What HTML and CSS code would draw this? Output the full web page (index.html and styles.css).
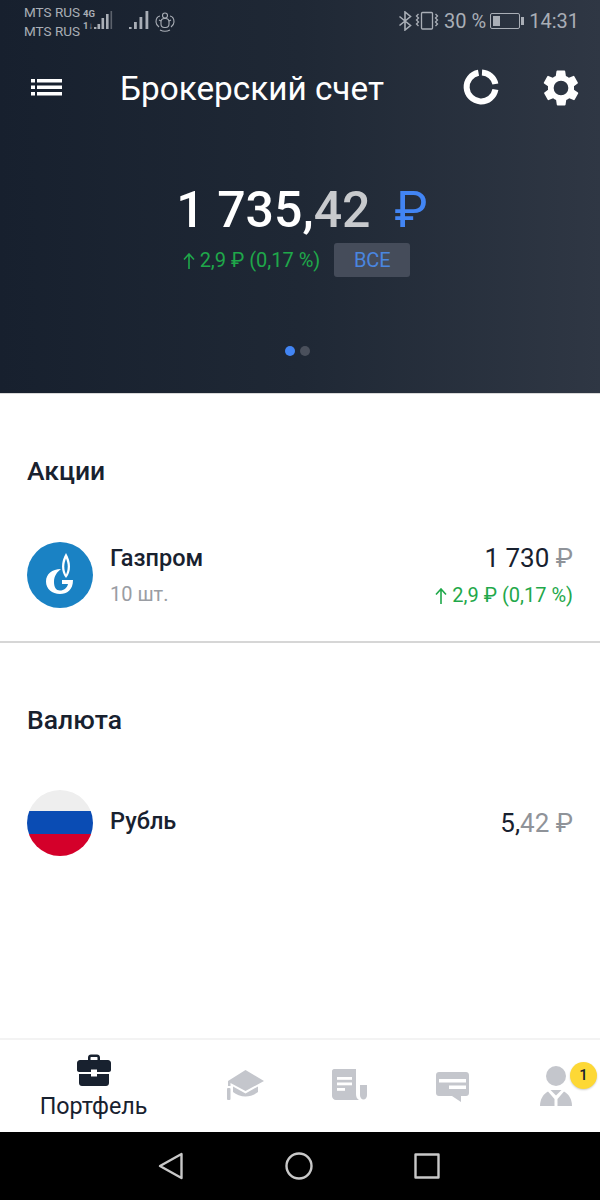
FILE: index.html
```html
<!DOCTYPE html>
<html lang="ru">
<head>
  <meta charset="UTF-8">
  <meta name="viewport" content="width=device-width, initial-scale=1.0">
  <title>Брокерский счет</title>
  <link rel="stylesheet" href="styles.css">
</head>
<body>
  <div class="app">
    <header class="hero">
      <div class="status-bar">
        <div class="status-left">
          <div class="carriers">
            <span>MTS RUS</span>
            <span>MTS RUS</span>
          </div>
          <div class="net-tags">
            <span>4G</span>
            <span>1↓</span>
          </div>
          <svg class="signal" width="19" height="20" viewBox="0 0 19 20" fill="#a9aeb6">
            <rect x="0" y="17" width="2.400" height="2"/>
            <rect x="3.500" y="14" width="2.600" height="5"/>
            <rect x="7.500" y="8" width="2.600" height="11"/>
            <rect x="12" y="4" width="2.600" height="15"/>
            <rect x="16.500" y="1" width="1.600" height="18" fill="#5c626c"/>
          </svg>
          <svg class="signal signal-two" width="20" height="20" viewBox="0 0 20 20" fill="#a9aeb6">
            <rect x="0" y="17" width="2.600" height="2"/>
            <rect x="5" y="12" width="2.800" height="7"/>
            <rect x="10.500" y="7" width="2.800" height="12"/>
            <rect x="16.500" y="1" width="2.800" height="18"/>
          </svg>
          <svg class="huawei" width="20" height="20" viewBox="0 0 20 20" fill="none" stroke="#a9aeb6" stroke-width="1.100">
            <circle cx="10" cy="3.500" r="2.500"/>
            <rect x="6" y="6.500" width="8" height="9" rx="3.500"/>
            <path d="M5 4C2.500 4.500 1 7 1 10c0 2 1 3.500 3 5M15 4c2.500.5 4 3 4 6 0 2-1 3.500-3 5M5 18c3 1.500 7 1.500 10 0M4 8l2 1M16 8l-2 1"/>
          </svg>
        </div>
        <div class="status-right">
          <svg width="14" height="20" viewBox="0 0 14 20" fill="none" stroke="#a9aeb6" stroke-width="1.600">
            <path d="M1.500 5.500l11 9L7 19V1l5.500 4.500-11 9"/>
          </svg>
          <svg class="vibrate" width="24" height="20" viewBox="0 0 24 20" fill="none" stroke="#a9aeb6" stroke-width="1.300">
            <rect x="6.500" y="1.500" width="11" height="16.500" rx="1"/>
            <path d="M3.500 3l-2 2 2 2-2 2 2 2-2 2 2 2M20.500 3l2 2-2 2 2 2-2 2 2 2-2 2"/>
          </svg>
          <span class="battery-pct">30 %</span>
          <div class="battery"><div class="battery-fill"></div></div>
          <span class="clock">14:31</span>
        </div>
      </div>

      <div class="toolbar">
        <svg class="menu-icon" width="31" height="18" viewBox="0 0 31 18" fill="#fff">
          <rect x="0" y="1" width="4" height="3.500"/>
          <rect x="6" y="1" width="25" height="3.500"/>
          <rect x="0" y="7.500" width="4" height="3.500"/>
          <rect x="6" y="7.500" width="25" height="3.500"/>
          <rect x="0" y="14" width="4" height="3.500"/>
          <rect x="6" y="14" width="25" height="3.500"/>
        </svg>
        <h1 class="toolbar-title">Брокерский счет</h1>
        <svg class="donut" width="36" height="36" viewBox="0 0 36 36" fill="none" stroke="#fff" stroke-width="6">
          <path d="M19 3.500A14.500 14.500 0 0 1 32.400 15"/>
          <path d="M32.400 20.500A14.500 14.500 0 1 1 15.500 3.700"/>
        </svg>
        <svg class="gear" width="42" height="42" viewBox="0 0 24 24" fill="#fff">
          <path fill-rule="evenodd" d="M19.400 13a7.600 7.600 0 0 0 0-2l2.100-1.600a.5.5 0 0 0 .1-.6l-2-3.500a.5.5 0 0 0-.6-.2l-2.500 1a7.300 7.300 0 0 0-1.700-1l-.4-2.700a.5.500 0 0 0-.5-.4h-4a.5.500 0 0 0-.5.400l-.4 2.700a7.300 7.300 0 0 0-1.700 1l-2.500-1a.5.5 0 0 0-.6.2l-2 3.500a.5.500 0 0 0 .1.600L4.600 11a7.600 7.600 0 0 0 0 2l-2.100 1.600a.5.5 0 0 0-.1.6l2 3.500a.5.500 0 0 0 .6.2l2.500-1c.5.400 1.100.7 1.700 1l.4 2.700a.5.500 0 0 0 .5.400h4a.5.500 0 0 0 .5-.400l.4-2.700c.6-.3 1.200-.6 1.700-1l2.500 1a.5.500 0 0 0 .6-.2l2-3.500a.5.500 0 0 0-.1-.6zM12 16.200a4.200 4.200 0 1 1 0-8.400 4.200 4.200 0 0 1 0 8.400z"/>
        </svg>
      </div>

      <div class="balance">
        <span class="balance-main">1 735,</span><span class="balance-cents">42</span><span class="balance-cur">₽</span>
      </div>
      <div class="balance-sub">
        <span class="gain">
          <svg class="arrow" width="12" height="16" viewBox="0 0 12 16" fill="none" stroke="#1fa84a" stroke-width="1.600">
            <path d="M6 16V1M1 6.500L6 1l5 5.500"/>
          </svg>
          2,9 ₽ (0,17 %)
        </span>
        <span class="all-btn">ВСЕ</span>
      </div>
      <div class="dots">
        <span class="dot dot-active"></span>
        <span class="dot"></span>
      </div>
    </header>

    <main class="content">
      <section class="group group-stocks">
        <h2 class="group-title">Акции</h2>
        <div class="asset">
          <svg class="asset-logo" width="66" height="66" viewBox="0 0 66 66">
            <circle cx="33" cy="33" r="33" fill="#1a82c4"/>
            <path d="M39 11c-2.700 4.500-4 9-4 13.500 0 4.500 1.300 8.500 4 11.500 2.700-3 4-7 4-11.500C43 20 41.700 15.500 39 11z" fill="#fff"/>
            <path d="M39 16.500c-1.200 3-1.700 5.500-1.700 8 0 3 .6 5.500 1.700 8 1.100-2.500 1.700-5 1.700-8 0-2.500-.5-5-1.700-8z" fill="#1a82c4"/>
            <path d="M34 27c-9 0-15 5-15 12.500C19 47 25 52 33 52c7 0 13-4 13-14H35v4h6c-1 4-4 6.500-8 6.500S27 45 27 40c0-6 3-10 7-13z" fill="#fff"/>
          </svg>
          <div class="asset-info">
            <div class="asset-name">Газпром</div>
            <div class="asset-qty">10 шт.</div>
          </div>
          <div class="asset-values">
            <div class="asset-price">1 730 <span class="muted">₽</span></div>
            <div class="asset-gain">
              <svg class="arrow" width="12" height="16" viewBox="0 0 12 16" fill="none" stroke="#1fa84a" stroke-width="1.600">
                <path d="M6 16V1M1 6.500L6 1l5 5.500"/>
              </svg>
              2,9 ₽ (0,17 %)
            </div>
          </div>
        </div>
      </section>

      <section class="group">
        <h2 class="group-title">Валюта</h2>
        <div class="asset asset-cash">
          <div class="flag">
            <div class="flag-white"></div>
            <div class="flag-blue"></div>
            <div class="flag-red"></div>
          </div>
          <div class="asset-info">
            <div class="asset-name">Рубль</div>
          </div>
          <div class="asset-values">
            <div class="asset-price">5,<span class="muted">42 ₽</span></div>
          </div>
        </div>
      </section>
    </main>

    <nav class="tabs">
      <div class="tab tab-first">
        <svg width="34" height="32" viewBox="0 0 34 32" fill="#18212f">
          <path d="M11 6V3.500C11 1.800 12.300 .5 14 .5h6c1.700 0 3 1.300 3 3V6h-2.500V3.500c0-.4-.2-.6-.5-.6h-6c-.3 0-.5.2-.5.6V6z"/>
          <path d="M3 6h28c1.600 0 3 1.400 3 3v7c0 1.200-1 2-2 2H20v-2.500h-6V18H2c-1 0-2-.8-2-2V9c0-1.600 1.400-3 3-3z"/>
          <path d="M2 20h12v2.500h6V20h12v9c0 1.700-1.300 3-3 3H5c-1.700 0-3-1.300-3-3z"/>
        </svg>
        <span class="tab-label">Портфель</span>
      </div>
      <div class="tab tab-hat">
        <svg width="37" height="30" viewBox="0 0 37 30" fill="#c4c6cc">
          <path d="M18.500 0L37 11 18.500 21 3.500 13v3H1v-5z"/>
          <path d="M6 16.500l12.500 7 12.500-7V22c-3 2.500-8 4.500-12.500 4.500S9 24.500 6 22z"/>
          <rect x="0" y="18" width="3.500" height="12" rx="1"/>
        </svg>
      </div>
      <div class="tab tab-doc">
        <svg width="35" height="31" viewBox="0 0 35 31" fill="#c4c6cc">
          <path d="M2 0h22v25c0 3 1 5 3 6H4c-2.200 0-4-1.800-4-4V2C0 1 1 0 2 0z"/>
          <path d="M28 16h7v10c0 2.500-1.500 4.500-3.500 4.500S28 28.500 28 26z"/>
          <rect x="5" y="8" width="15" height="2.800" fill="#fff"/>
          <rect x="5" y="13.500" width="15" height="2.800" fill="#fff"/>
          <rect x="5" y="19" width="8" height="2.800" fill="#fff"/>
        </svg>
      </div>
      <div class="tab tab-chat">
        <svg width="33" height="30" viewBox="0 0 33 30" fill="#c4c6cc">
          <path d="M3 0h27c1.700 0 3 1.300 3 3v18c0 1.700-1.300 3-3 3H25l0 6-9-6H3c-1.700 0-3-1.300-3-3V3C0 1.300 1.300 0 3 0z"/>
          <rect x="3" y="7" width="27" height="3.500" fill="#fff"/>
          <rect x="13" y="13.500" width="17" height="3.500" fill="#fff"/>
        </svg>
      </div>
      <div class="tab tab-last">
        <svg width="32" height="40" viewBox="0 0 32 40" fill="#c4c6cc">
          <circle cx="16" cy="10" r="10"/>
          <path d="M10.500 24h11L16 29.500z"/>
          <path d="M8 25.500L14.500 33v7H0c0-6 2.500-11.500 8-14.500z"/>
          <path d="M24 25.500L17.500 33v7H32c0-6-2.500-11.500-8-14.500z"/>
        </svg>
        <span class="badge">1</span>
      </div>
    </nav>

    <div class="sys-nav">
      <svg width="26" height="28" viewBox="0 0 26 28" fill="none" stroke="#c8c8c8" stroke-width="2.400" stroke-linejoin="round">
        <path d="M23.500 2v24L2 14z"/>
      </svg>
      <svg width="28" height="28" viewBox="0 0 28 28" fill="none" stroke="#c8c8c8" stroke-width="2.400">
        <circle cx="14" cy="14" r="12.500"/>
      </svg>
      <svg width="26" height="26" viewBox="0 0 26 26" fill="none" stroke="#c8c8c8" stroke-width="2.400" stroke-linejoin="round">
        <rect x="1.500" y="1.500" width="23" height="23"/>
      </svg>
    </div>
  </div>
</body>
</html>
```

FILE: styles.css
```css
* {
  box-sizing: border-box;
}
body {
  margin: 0;
  font-family: Roboto, "Noto Sans", sans-serif;
  background-color: #fff;
  color: #18212f;
}
.app {
  width: 600px;
  height: 1200px;
  display: flex;
  flex-direction: column;
  overflow: hidden;
}
.hero {
  height: 394px;
  background: linear-gradient(90deg, #17202e 0%, #1f2835 50%, #2f3744 100%);
  border-bottom: 1px solid #d8d8d8;
  color: #fff;
  display: flex;
  flex-direction: column;
}
.status-bar {
  height: 46px;
  padding: 3px 21px 0 24px;
  display: flex;
  justify-content: space-between;
  color: #a9aeb6;
}
.status-left {
  display: flex;
  align-items: flex-start;
}
.carriers {
  display: flex;
  flex-direction: column;
  font-size: 13.500px;
  line-height: 19px;
}
.net-tags {
  display: flex;
  flex-direction: column;
  width: 11px;
  margin-left: 3px;
  padding-top: 5px;
  font-size: 9.500px;
  font-weight: 700;
  line-height: 12px;
  white-space: nowrap;
}
.signal {
  margin-top: 7px;
}
.signal-two {
  margin-left: 16px;
}
.huawei {
  margin-top: 9px;
  margin-left: 6px;
}
.status-right {
  display: flex;
  align-items: center;
  height: 36px;
}
.vibrate {
  margin-left: 3px;
}
.battery-pct {
  font-size: 20px;
  margin-left: 5px;
}
.battery {
  width: 30px;
  height: 16px;
  margin-left: 4px;
  border: 1px solid #a9aeb6;
  border-radius: 2px;
  padding: 2px;
  position: relative;
}
.battery::after {
  content: "";
  position: absolute;
  right: -5px;
  top: 3px;
  width: 3px;
  height: 8px;
  background-color: #a9aeb6;
}
.battery-fill {
  width: 30%;
  height: 100%;
  background-color: #a9aeb6;
}
.clock {
  font-size: 20px;
  margin-left: 9px;
}
.toolbar {
  height: 84px;
  display: flex;
  align-items: center;
  padding: 0 18px 0 31px;
}
.menu-icon {
  flex-shrink: 0;
  margin-bottom: 3px;
}
.toolbar-title {
  margin: 0 0 0 58px;
  flex: 1;
  font-size: 33.300px;
  font-weight: 400;
}
.donut {
  margin-right: 41px;
  margin-bottom: 3px;
}
.balance {
  margin-top: 50px;
  padding-left: 4px;
  display: flex;
  justify-content: center;
  align-items: baseline;
  font-size: 50px;
  font-weight: 500;
  line-height: 60px;
}
.balance-cents {
  color: #c8cacd;
}
.balance-cur {
  color: #4285f4;
  margin-left: 24px;
  font-weight: 400;
}
.balance-sub {
  margin-top: 3px;
  padding-right: 7px;
  display: flex;
  justify-content: center;
  align-items: center;
  gap: 14px;
}
.gain {
  font-size: 20px;
  color: #1fa84a;
}
.arrow {
  vertical-align: -2px;
}
.all-btn {
  width: 76px;
  height: 34px;
  line-height: 34px;
  text-align: center;
  background-color: #454c5a;
  border-radius: 3px;
  color: #4a86e0;
  font-size: 20px;
}
.dots {
  margin-top: 69px;
  padding-right: 6px;
  display: flex;
  justify-content: center;
  gap: 5px;
}
.dot {
  width: 10px;
  height: 10px;
  border-radius: 50%;
  background-color: #4a505c;
}
.dot-active {
  background-color: #4285f4;
}
.content {
  flex: 1;
}
.group {
  padding: 0 27px;
}
.group-stocks {
  padding-top: 60px;
  height: 249px;
  border-bottom: 2px solid #d6d6d6;
}
.group-title {
  margin: 0;
  font-size: 26.500px;
  font-weight: 500;
  line-height: 34px;
}
.group + .group {
  padding-top: 60px;
}
.asset {
  margin-top: 53px;
  display: flex;
  align-items: center;
}
.asset-logo {
  flex-shrink: 0;
}
.asset-info {
  margin-left: 17px;
  flex: 1;
}
.asset-cash .asset-info {
  padding-bottom: 4px;
}
.asset-name {
  font-size: 23.500px;
  font-weight: 500;
  line-height: 30px;
}
.asset-qty {
  margin-top: 8px;
  font-size: 20px;
  line-height: 26px;
  color: #9a9da3;
}
.asset-values {
  text-align: right;
}
.asset-price {
  font-size: 26px;
  line-height: 34px;
}
.asset-gain {
  margin-top: 7px;
  font-size: 20px;
  line-height: 26px;
  color: #1fa84a;
}
.muted {
  color: #8f9399;
}
.flag {
  width: 66px;
  height: 66px;
  border-radius: 50%;
  overflow: hidden;
  flex-shrink: 0;
}
.flag-white {
  height: 21px;
  background-color: #eeeeee;
}
.flag-blue {
  height: 23px;
  background-color: #0a4cb4;
}
.flag-red {
  height: 22px;
  background-color: #d4002a;
}
.tabs {
  height: 94px;
  border-top: 2px solid #f3f3f3;
  display: grid;
  grid-template-columns: 194px 103.500px 103.500px 103.500px 1fr;
}
.tab {
  display: flex;
  flex-direction: column;
  align-items: center;
}
.tab-first {
  padding-top: 14px;
  padding-right: 7px;
}
.tab-label {
  margin-top: 6px;
  font-size: 23.300px;
  line-height: 28px;
}
.tab-hat {
  padding-top: 30px;
}
.tab-doc {
  padding-top: 29px;
}
.tab-chat {
  padding-top: 32px;
}
.tab-last {
  padding-top: 26px;
  padding-left: 7px;
  position: relative;
}
.badge {
  position: absolute;
  top: 22px;
  right: 3px;
  width: 27px;
  height: 27px;
  border-radius: 50%;
  background-color: #fdd835;
  color: #18212f;
  font-size: 15px;
  font-weight: 500;
  line-height: 27px;
  text-align: center;
  box-shadow: 0 1px 2px rgba(0, 0, 0, 0.2);
}
.sys-nav {
  height: 68px;
  background-color: #000;
  display: flex;
  align-items: center;
  padding: 0 160px 0 158px;
  justify-content: space-between;
}
```
